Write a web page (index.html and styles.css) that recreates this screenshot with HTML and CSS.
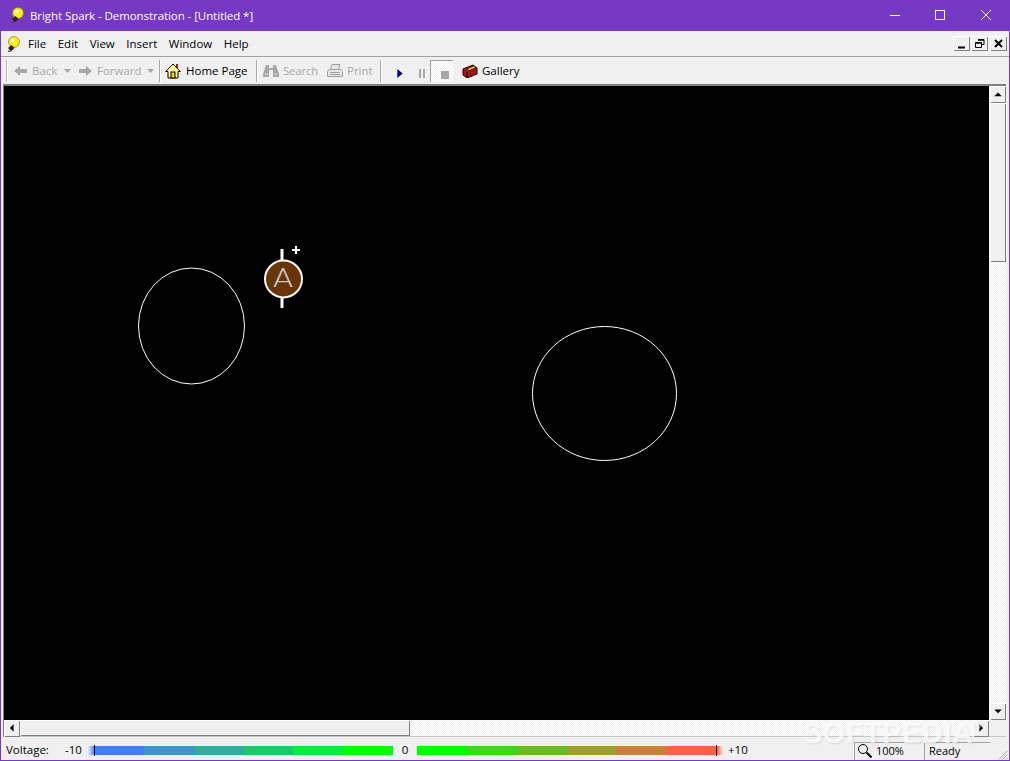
FILE: index.html
```html
<!DOCTYPE html>
<html lang="en">
<head>
<meta charset="utf-8">
<title>Bright Spark - Demonstration - [Untitled *]</title>
<link rel="stylesheet" href="styles.css">
</head>
<body>
<div class="window">
  <header class="titlebar">
    <svg class="bulb title-bulb" viewBox="0 0 16 16"><circle cx="8" cy="6" r="5.500" fill="#f6f01c" stroke="#8a7c10" stroke-width=".7"/><circle cx="6.500" cy="4.500" r="1.800" fill="#fffff0"/><path d="M2 12l3.500-3 3 3-3.500 3.500z" fill="#282828"/><path d="M2 15l2.500 1" stroke="#505050" stroke-width="1.500"/></svg>
    <span class="title-text">Bright Spark - Demonstration - [Untitled *]</span>
    <div class="caption-buttons">
      <svg class="caption" viewBox="0 0 46 31"><path d="M18 15.500h10" stroke="#fff"/></svg>
      <svg class="caption" viewBox="0 0 46 31"><rect x="17.500" y="10.500" width="9" height="9" fill="none" stroke="#fff"/></svg>
      <svg class="caption" viewBox="0 0 46 31"><path d="M17 10l10 10M27 10l-10 10" stroke="#fff"/></svg>
    </div>
  </header>

  <nav class="menubar">
    <svg class="bulb menu-bulb" viewBox="0 0 16 16"><circle cx="8" cy="6" r="5.500" fill="#f6f01c" stroke="#8a7c10" stroke-width=".7"/><circle cx="6.500" cy="4.500" r="1.800" fill="#fffff0"/><path d="M2 12l3.500-3 3 3-3.500 3.500z" fill="#282828"/><path d="M2 15l2.500 1" stroke="#505050" stroke-width="1.500"/></svg>
    <span class="menu-item">File</span>
    <span class="menu-item">Edit</span>
    <span class="menu-item">View</span>
    <span class="menu-item">Insert</span>
    <span class="menu-item">Window</span>
    <span class="menu-item">Help</span>
    <div class="mdi-buttons">
      <span class="mdi-btn"><svg viewBox="0 0 15 13"><path d="M4 10.500h7" stroke="#000" stroke-width="2"/></svg></span>
      <span class="mdi-btn"><svg viewBox="0 0 15 13"><path d="M6 2.500h6v5h-2M3.500 5.500h6v5h-6z" fill="none" stroke="#000"/><path d="M6 3h6M3 6h6" stroke="#000" stroke-width="1.500"/></svg></span>
      <span class="mdi-btn"><svg viewBox="0 0 15 13"><path d="M4 3l7 7M11 3l-7 7" stroke="#000" stroke-width="2"/></svg></span>
    </div>
  </nav>

  <div class="toolbar">
    <span class="gripper"></span>
    <svg class="tool-icon back-icon" viewBox="0 0 13 12"><path d="M6 1v3h7v4H6v3L0 6z" fill="#a8a8a8"/></svg>
    <span class="tool-label disabled back-label">Back</span>
    <svg class="caret" viewBox="0 0 7 4"><path d="M0 0h7L3.500 4z" fill="#a8a8a8"/></svg>
    <svg class="tool-icon fwd-icon" viewBox="0 0 13 12"><path d="M7 1v3H0v4h7v3l6-5z" fill="#a8a8a8"/></svg>
    <span class="tool-label disabled fwd-label">Forward</span>
    <svg class="caret" viewBox="0 0 7 4"><path d="M0 0h7L3.500 4z" fill="#a8a8a8"/></svg>
    <span class="sep sep-a"></span>
    <svg class="home-icon" viewBox="0 0 16 16"><rect x="11" y="1" width="2" height="4" fill="#c01818"/><path d="M8 1L.7 8.500h2.300V15h10V8.500h2.300z" fill="#fff8a0" stroke="#000"/><rect x="6" y="9" width="4" height="6" fill="#f0d800" stroke="#000"/></svg>
    <span class="tool-label home-label">Home Page</span>
    <span class="sep sep-b"></span>
    <svg class="wide-icon bino-icon" viewBox="0 0 16 14"><path d="M3 1h3v3h4V1h3l3 9v3H10V6H6v7H0v-3z" fill="#a8a8a8"/><path d="M2 10h3M11 10h3" stroke="#e0e0e0"/></svg>
    <span class="tool-label disabled search-label">Search</span>
    <svg class="wide-icon print-icon" viewBox="0 0 16 14"><path d="M5 .5h8l-1.500 5h-8zM2 5.500h12l1.500 2v5H.5v-5z" fill="#e8e8e8" stroke="#a0a0a0"/><path d="M3 8.500h10M3 10.500h10" stroke="#a0a0a0"/></svg>
    <span class="tool-label disabled print-label">Print</span>
    <span class="sep sep-c"></span>
    <svg class="play-icon" viewBox="0 0 6 10"><path d="M0 0l6 5-6 5z" fill="#000080"/></svg>
    <svg class="pause-icon" viewBox="0 0 6 9"><path d="M0 0h2v9H0zM4 0h2v9H4z" fill="#a8a8a8"/></svg>
    <span class="stop-btn"><span class="stop-square"></span></span>
    <svg class="gallery-icon" viewBox="0 0 16 14"><path d="M1 5l10-4 4 3v6l-10 4-4-3z" fill="#a01818" stroke="#200000"/><path d="M5 5l7-3 2 1.500-7 3z" fill="#f0e040" stroke="#200000" stroke-width=".6"/><path d="M5 14V8" stroke="#200000"/></svg>
    <span class="tool-label gallery-label">Gallery</span>
  </div>

  <main class="workspace">
    <div class="work-top">
      <div class="canvas">
        <svg viewBox="4 86 985 634" width="985" height="634">
          <ellipse cx="191.500" cy="326" rx="53" ry="58" fill="none" stroke="#fff"/>
          <ellipse cx="604.500" cy="393.500" rx="72" ry="67" fill="none" stroke="#fff"/>
          <path d="M282 249v14M282 295v13" stroke="#fff" stroke-width="3"/>
          <circle cx="283.500" cy="279" r="18.500" fill="#683408" stroke="#fff" stroke-width="2"/>
          <path d="M292 250h8M296 246v8" stroke="#fff" stroke-width="2"/>
          <text x="273" y="287" textLength="20" lengthAdjust="spacingAndGlyphs" class="amm-letter">A</text>
        </svg>
      </div>
      <div class="vscroll">
        <span class="sb-btn"><svg viewBox="0 0 15 15"><path d="M4 9.500h7L7.500 6z" fill="#000"/></svg></span>
        <span class="vthumb"></span>
        <span class="track"></span>
        <span class="sb-btn"><svg viewBox="0 0 15 15"><path d="M4 6h7L7.500 9.500z" fill="#000"/></svg></span>
      </div>
    </div>
    <div class="hscroll">
      <span class="sb-btn"><svg viewBox="0 0 15 15"><path d="M9 4v7L5.500 7.500z" fill="#000"/></svg></span>
      <span class="hthumb"></span>
      <span class="track"></span>
      <span class="sb-btn"><svg viewBox="0 0 15 15"><path d="M6 4v7l3.500-3.500z" fill="#000"/></svg></span>
      <span class="corner"></span>
    </div>
  </main>

  <footer class="status">
    <span class="volt-label">Voltage:</span>
    <span class="volt-min">-10</span>
    <div class="volt-bar">
      <i class="fade fade-left"></i><i class="marker marker-left"></i>
      <i class="seg c1"></i><i class="seg c2"></i><i class="seg c3"></i><i class="seg c4"></i><i class="seg c5"></i><i class="seg c6"></i>
    </div>
    <span class="volt-zero">0</span>
    <div class="volt-bar">
      <i class="seg c6"></i><i class="seg c7"></i><i class="seg c8"></i><i class="seg c9"></i><i class="seg c10"></i><i class="seg c11"></i>
      <i class="marker"></i><i class="fade fade-right"></i>
    </div>
    <span class="volt-max">+10</span>
    <div class="pane zoom-pane">
      <svg class="zoom-icon" viewBox="0 0 15 15"><circle cx="6" cy="6" r="4.500" fill="none" stroke="#000"/><path d="M9.500 9.500l5 5" stroke="#000" stroke-width="2"/></svg>
      <span>100%</span>
    </div>
    <div class="pane ready-pane"><span>Ready</span></div>
    <svg class="grip" viewBox="0 0 11 11"><path d="M10.500 2l-8.500 8.500M10.500 5.500l-5 5M10.500 9l-1.500 1.500" stroke="#a0a0a0"/></svg>
  </footer>

  <div class="watermark">SOFTPEDIA<sup>®</sup></div>
</div>
</body>
</html>
```

FILE: styles.css
```css
* { box-sizing: border-box; }
html, body { margin: 0; padding: 0; background: #f0f0f0; }
body { width: 1010px; height: 761px; overflow: hidden; font-family: "Open Sans", "Noto Sans", sans-serif; font-size: 12px; color: #000; }
svg { display: block; flex: none; }

.window { position: relative; width: 1010px; height: 761px; display: flex; flex-direction: column; border: 1px solid #7539c4; border-top: 0; background: #f0f0f0; overflow: hidden; }

.titlebar { height: 31px; flex: none; margin: 0 -1px; background: #7539c4; color: #fff; display: flex; align-items: center; padding-left: 10px; }
.title-bulb { width: 16px; height: 16px; margin-top: -2px; }
.title-text { margin-left: 4px; font-size: 11.500px; letter-spacing: -.07px; margin-top: -1px; }
.caption-buttons { margin-left: auto; display: flex; }
.caption { width: 46px; height: 31px; }

.menubar { height: 26px; flex: none; display: flex; align-items: center; border-bottom: 1px solid #a0a0a0; padding-left: 5px; }
.menu-bulb { width: 16px; height: 16px; margin-right: 6px; }
.menu-item { margin-right: 11.500px; font-size: 11.500px; }
.mdi-buttons { margin-left: auto; display: flex; gap: 1px; padding-right: 2px; }
.mdi-btn { width: 17px; height: 15px; background: #f0f0f0; box-shadow: inset 1px 1px 0 #fff, inset -1px -1px 0 #808080; padding: 1px; }
.mdi-btn:last-child { margin-left: 1px; }
.mdi-btn svg { width: 15px; height: 13px; }

.toolbar { height: 27px; flex: none; display: flex; align-items: center; padding-left: 5px; }
.gripper { width: 2px; height: 22px; background: #b8b8b8; border-right: 1px solid #fff; margin-right: 6px; }
.tool-icon { width: 13px; height: 12px; }
.tool-label { font-size: 11.500px; color: #000; }
.disabled { color: #a8a8a8; }
.back-label { margin-left: 5px; width: 32px; }
.caret { width: 7px; height: 4px; }
.fwd-icon { margin-left: 8px; }
.fwd-label { margin-left: 5px; width: 50px; }
.sep { width: 2px; height: 22px; background: #a8a8a8; border-right: 1px solid #fff; }
.sep-a { margin-left: 5px; }
.home-icon { width: 16px; height: 16px; margin-left: 4px; }
.home-label { margin-left: 5px; width: 64px; }
.sep-b { margin-left: 6px; }
.wide-icon { width: 16px; height: 14px; }
.bino-icon { margin-left: 5px; }
.search-label { margin-left: 4px; width: 39px; letter-spacing: -.2px; }
.print-icon { margin-left: 5px; }
.print-label { margin-left: 4px; width: 28px; }
.sep-c { margin-left: 5px; }
.play-icon { width: 6px; height: 9px; margin: 6px 0 0 15px; }
.pause-icon { width: 6px; height: 9px; margin: 6px 0 0 16px; }
.stop-btn { width: 23px; height: 22px; margin: 1px 0 0 5px; border-left: 1px solid #a0a0a0; border-top: 1px solid #a0a0a0; background: repeating-conic-gradient(#f0f0f0 0 25%, #fff 0 50%) 0 0 / 2px 2px; display: flex; align-items: flex-end; justify-content: flex-end; padding: 0 4px 3px 0; }
.stop-square { width: 8px; height: 8px; background: #a8a8a8; }
.gallery-icon { width: 16px; height: 14px; margin-left: 9px; }
.gallery-label { margin-left: 4px; }

.workspace { flex: 1; min-height: 0; display: flex; flex-direction: column; margin: 0 3px 0 2px; border-top: 2px solid #808080; border-left: 1px solid #808080; }
.work-top { flex: 1; min-height: 0; display: flex; }
.canvas { width: 985px; background: #000; overflow: hidden; }
.amm-letter { font-family: Roboto, "Liberation Sans", sans-serif; font-weight: 300; font-size: 26px; fill: #c8c4c0; }
.vscroll { width: 17px; display: flex; flex-direction: column; background: #f0f0f0; padding-left: 1px; }
.sb-btn { width: 16px; height: 17px; flex: none; background: #f0f0f0; box-shadow: inset 1px 1px 0 #fff, inset -1px -1px 0 #808080; }
.sb-btn svg { width: 16px; height: 16px; }
.vthumb { height: 159px; flex: none; background: #f0f0f0; box-shadow: inset 1px 1px 0 #fff, inset -1px -1px 0 #808080; }
.track { flex: 1; background: repeating-conic-gradient(#f0f0f0 0 25%, #fff 0 50%) 0 0 / 2px 2px; }
.hscroll { height: 17px; flex: none; display: flex; border-bottom: 1px solid #c8c8c8; }
.hthumb { width: 390px; flex: none; background: #f0f0f0; box-shadow: inset 1px 1px 0 #fff, inset -1px -1px 0 #808080; }
.corner { width: 17px; flex: none; background: #f0f0f0; }

.status { height: 23px; flex: none; display: flex; align-items: center; padding-left: 5px; font-size: 11px; position: relative; }
.status span { white-space: nowrap; }
.volt-label { width: 59px; margin-top: 2px; font-size: 11.500px; }
.volt-min { width: 23px; margin-top: 2px; font-size: 11.500px; }
.volt-zero { width: 24px; text-align: center; margin-top: 2px; font-size: 11.500px; }
.volt-bar { display: flex; height: 9px; margin-top: 4px; position: relative; }
.seg { width: 50px; height: 9px; display: block; }
.fade { width: 6px; height: 9px; display: block; }
.fade-left { background: linear-gradient(90deg, #e8effc, #5088ff); }
.fade-right { background: linear-gradient(90deg, #ff6040, #fde8e0); }
.marker { width: 1px; height: 11px; margin-top: -1px; background: #000; display: block; flex: none; }
.marker-left { margin-right: -1px; position: relative; }
.c1 { background: #4080ff; }
.c2 { background: #3898cc; }
.c3 { background: #2cb09c; }
.c4 { background: #1cc868; width: 49px; }
.c5 { background: #10e83c; }
.c6 { background: #00ff00; }
.c7 { background: #38dc14; }
.c8 { background: #68bc1c; }
.c9 { background: #9ca024; width: 49px; }
.c10 { background: #cc8034; }
.c11 { background: #ff6040; }
.volt-max { margin: 2px 0 0 5px; width: 127px; font-size: 11.500px; }
.pane { height: 18px; display: flex; align-items: center; border-top: 1px solid #a0a0a0; border-left: 1px solid #a0a0a0; margin-top: 5px; padding-bottom: 2px; }
.zoom-pane { width: 67px; padding-left: 2px; gap: 4px; margin-left: -1px; }
.zoom-icon { width: 15px; height: 15px; }
.ready-pane { width: 66px; margin-left: 3px; padding-left: 4px; }
.grip { width: 11px; height: 11px; position: absolute; right: 1px; bottom: 0; }

.watermark { position: absolute; left: 802px; top: 723px; line-height: 20px; font-family: "Liberation Sans", sans-serif; font-weight: 700; font-size: 29px; letter-spacing: .5px; color: rgba(255, 255, 255, .8); text-shadow: 1px 1px 2px rgba(0, 0, 0, .1); pointer-events: none; white-space: nowrap; }
.watermark sup { font-size: 10px; font-weight: 400; vertical-align: 14px; line-height: 0; }
```
